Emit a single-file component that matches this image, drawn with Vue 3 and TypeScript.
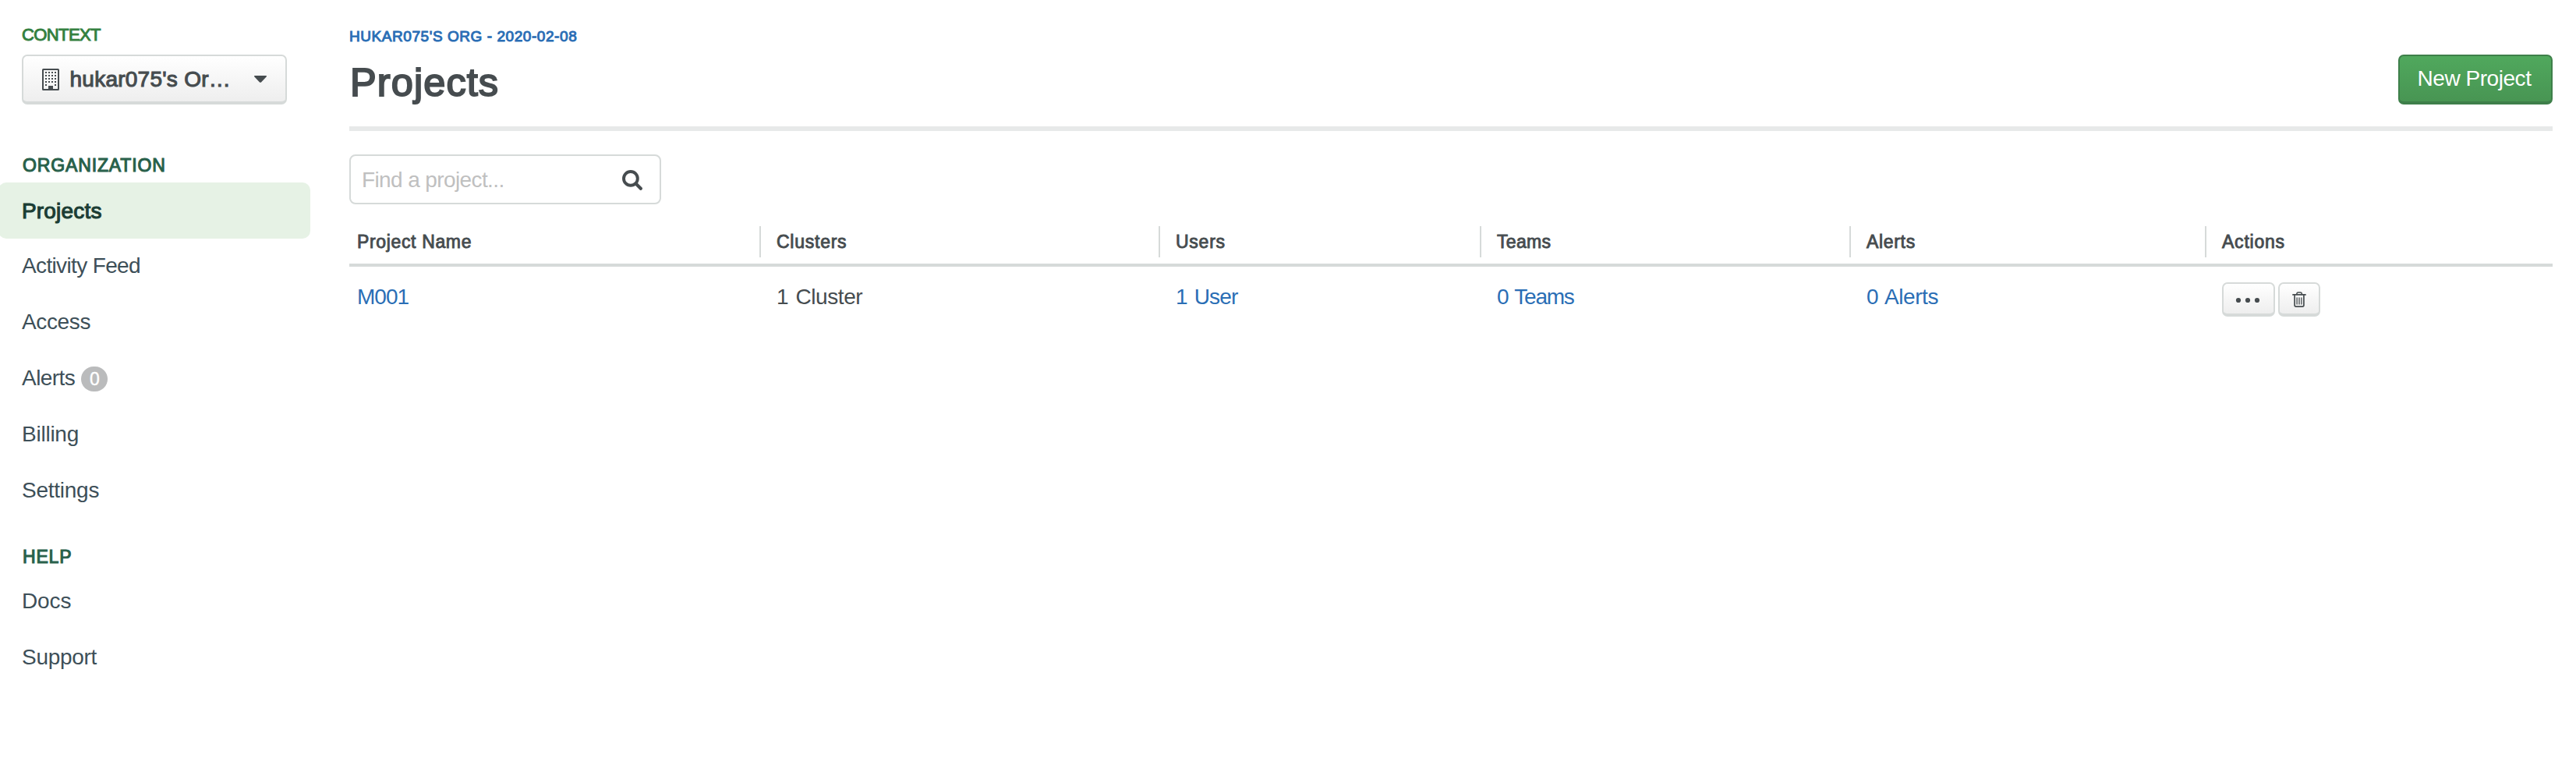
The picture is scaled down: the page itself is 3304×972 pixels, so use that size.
<script setup lang="ts">
interface NavItem {
  label: string
  tracking: number
  active?: boolean
  badge?: number
}
interface NavSection {
  title: string
  tracking: number
  items: NavItem[]
}
interface Column {
  title: string
  titleTracking: number
  value: string
  valueTracking: number
  link: boolean
}

const sections: NavSection[] = [
  {
    title: 'Organization',
    tracking: 0.87,
    items: [
      { label: 'Projects', tracking: 0.18, active: true },
      { label: 'Activity Feed', tracking: -0.64 },
      { label: 'Access', tracking: -0.36 },
      { label: 'Alerts', tracking: -0.55, badge: 0 },
      { label: 'Billing', tracking: -0.24 },
      { label: 'Settings', tracking: -0.25 },
    ],
  },
  {
    title: 'Help',
    tracking: 0.8,
    items: [
      { label: 'Docs', tracking: -0.1 },
      { label: 'Support', tracking: -0.3 },
    ],
  },
]

const columns: Column[] = [
  { title: 'Project Name', titleTracking: 0.65, value: 'M001', valueTracking: -1, link: true },
  { title: 'Clusters', titleTracking: 0.75, value: '1 Cluster', valueTracking: -0.42, link: false },
  { title: 'Users', titleTracking: 0.75, value: '1 User', valueTracking: -0.85, link: true },
  { title: 'Teams', titleTracking: 0.33, value: '0 Teams', valueTracking: -1.25, link: true },
  { title: 'Alerts', titleTracking: 0.68, value: '0 Alerts', valueTracking: -0.42, link: true },
]

const windows: [number, number][] = []
for (let row = 0; row < 5; row++) {
  for (let col = 0; col < 4; col++) {
    if (row === 4 && (col === 1 || col === 2)) continue
    windows.push([4 + col * 4, 4 + row * 4])
  }
}

const spacing = (px: number) => ({ letterSpacing: `${px}px` })
</script>

<template>
  <div class="page">
    <aside class="sidebar">
      <div class="context-label">CONTEXT</div>
      <button class="btn context-select" type="button">
        <svg class="building" width="22" height="28" viewBox="0 0 22 28">
          <rect x="1" y="1" width="20" height="26" rx="0.6" fill="none" stroke="#464c4f" stroke-width="2" />
          <rect v-for="([x, y], i) in windows" :key="i" :x="x" :y="y" width="2" height="2" fill="#464c4f" />
          <rect x="8" y="22" width="6" height="5" fill="#464c4f" />
        </svg>
        <span class="context-name">hukar075's Or…</span>
        <svg class="caret" width="16" height="9" viewBox="0 0 16 9">
          <path d="M0.6 0H15.4Q16.4 0.4 15.6 1.4L9 8.4Q8 9.3 7 8.4L0.4 1.4Q-0.4 0.4 0.6 0Z" fill="#464c4f" />
        </svg>
      </button>

      <nav v-for="s in sections" :key="s.title" class="section">
        <h2 class="section-title" :style="spacing(s.tracking)">{{ s.title }}</h2>
        <a v-for="item in s.items" :key="item.label" class="nav-item" :class="{ active: item.active }">
          <span :style="spacing(item.tracking)">{{ item.label }}</span>
          <span v-if="item.badge !== undefined" class="badge">{{ item.badge }}</span>
        </a>
      </nav>
    </aside>

    <main class="main">
      <header class="header">
        <div>
          <a class="crumb">HUKAR075'S ORG - 2020-02-08</a>
          <h1 class="title">Projects</h1>
        </div>
        <button class="btn btn-primary" type="button">New Project</button>
      </header>

      <div class="search">
        <span class="placeholder">Find a project...</span>
        <svg class="magnifier" width="26" height="26" viewBox="0 0 26 26">
          <circle cx="10.9" cy="10.9" r="8.9" fill="none" stroke="#464c4f" stroke-width="3.9" />
          <path d="M17.6 17.6L23.8 23.8" stroke="#464c4f" stroke-width="4.2" stroke-linecap="round" />
        </svg>
      </div>

      <section class="table">
        <div class="row head">
          <div v-for="c in columns" :key="c.title" class="th" :style="spacing(c.titleTracking)">{{ c.title }}</div>
          <div class="th actions-title">Actions</div>
        </div>
        <div class="row">
          <div v-for="c in columns" :key="c.title" class="td" :class="{ link: c.link }" :style="spacing(c.valueTracking)">{{ c.value }}</div>
          <div class="td actions">
            <button class="btn more" type="button" aria-label="More">
              <svg width="32" height="8" viewBox="0 0 32 8">
                <circle v-for="x in [4, 16, 28]" :key="x" :cx="x" cy="4" r="3.1" fill="#464c4f" />
              </svg>
            </button>
            <button class="btn remove" type="button" aria-label="Delete">
              <svg width="18" height="20" viewBox="0 0 18 20" fill="none" stroke="#464c4f" stroke-linecap="round">
                <path d="M1 3.9H17" stroke-width="1.8" />
                <path d="M5.9 3.6V2.6Q6.1 1 7.6 1H10.6Q12.1 1 12.3 2.6V3.6" stroke-width="1.6" />
                <path d="M3.1 4.2V17.2Q3.1 19.1 5 19.1H13Q14.9 19.1 14.9 17.2V4.2" stroke-width="1.7" />
                <path d="M6.1 7.8V16M9 7.8V16M11.9 7.8V16" stroke-width="1.3" />
              </svg>
            </button>
          </div>
        </div>
      </section>
    </main>
  </div>
</template>

<style>
body {
  margin: 0;
  background: #fff;
}
</style>

<style scoped>
.page {
  display: flex;
  box-sizing: border-box;
  width: 100%;
  height: 972px;
  overflow: hidden;
  font-family: 'Liberation Sans', Arial, sans-serif;
  font-size: 28px;
  color: #464c4f;
  font-kerning: normal;
}
.sidebar {
  flex: 0 0 398px;
  padding-top: 32px;
}
.context-label {
  margin: 0 0 13px 28px;
  font-size: 22px;
  line-height: 25px;
  letter-spacing: -0.6px;
  color: #33803f;
  -webkit-text-stroke: 1px #33803f;
}
.btn {
  display: flex;
  align-items: center;
  box-sizing: border-box;
  margin: 0;
  padding: 0;
  border: 2px solid #d6dad9;
  border-bottom-width: 4px;
  border-radius: 7px;
  background: linear-gradient(#fff, #eeeeee);
  font: inherit;
  color: inherit;
  white-space: nowrap;
}
.context-select {
  width: 340px;
  height: 64px;
  margin-left: 28px;
  padding: 1px 24px 0;
}
.building {
  margin-top: 1px;
}
.context-name {
  margin-left: 13.5px;
  line-height: 31px;
  letter-spacing: 0.25px;
  -webkit-text-stroke: 1.1px #464c4f;
}
.caret {
  margin-left: auto;
}
.section {
  padding-top: 35px;
}
.context-select + .section {
  padding-top: 65px;
}
.section-title {
  margin: 0 0 9px 29px;
  font-size: 23px;
  font-weight: 400;
  line-height: 26px;
  text-transform: uppercase;
  color: #28604a;
  -webkit-text-stroke: 1.1px #28604a;
}
.nav-item {
  display: flex;
  align-items: center;
  box-sizing: border-box;
  height: 72px;
  padding: 0 0 3px 28px;
  line-height: 31px;
  color: #3d4f58;
}
.nav-item.active {
  margin-left: -2px;
  padding: 1px 0 0 30px;
  border-radius: 10px;
  background: #e6f2e5;
  color: #1b3d34;
  -webkit-text-stroke: 1.1px #1b3d34;
}
.badge {
  width: 34px;
  height: 32px;
  margin: 3px 0 0 8px;
  border-radius: 16px;
  background: #babbbc;
  color: #fff;
  font-size: 23px;
  line-height: 32px;
  text-align: center;
  -webkit-text-stroke: 0.4px #fff;
}
.main {
  flex: 1;
  padding: 36px 30px 0 50px;
}
.header {
  display: flex;
  justify-content: space-between;
  align-items: flex-end;
  height: 98px;
  padding-bottom: 28px;
  border-bottom: 6px solid #e7e9e9;
}
.crumb {
  display: block;
  font-size: 19px;
  line-height: 21px;
  letter-spacing: 0.56px;
  color: #2a6eb5;
  -webkit-text-stroke: 1px #2a6eb5;
}
.title {
  margin: 20px 0 0 1px;
  font-size: 50.5px;
  font-weight: 400;
  line-height: 57px;
  letter-spacing: 1.1px;
  -webkit-text-stroke: 2px #464c4f;
}
.btn-primary {
  width: 198px;
  height: 64px;
  padding: 0 0 1px 22.5px;
  border-color: #3e7f4a;
  background: linear-gradient(#50a85d, #489553);
  color: #fff;
  letter-spacing: -0.45px;
}
.search {
  display: flex;
  align-items: center;
  justify-content: space-between;
  box-sizing: border-box;
  width: 400px;
  height: 64px;
  margin-top: 30px;
  padding: 1px 22px 0 14px;
  border: 2px solid #d6dad9;
  border-radius: 8px;
}
.placeholder {
  line-height: 31px;
  letter-spacing: -0.61px;
  color: #bfc0c0;
}
.magnifier {
  margin-top: 1px;
}
.table {
  margin-top: 28px;
}
.row {
  display: grid;
  grid-template-columns: 526fr 512fr 412fr 474fr 456fr 446fr;
}
.head {
  padding-bottom: 8px;
  border-bottom: 4px solid #d6dad9;
}
.th {
  padding-left: 20px;
  border-left: 2px solid #d6dad9;
  font-size: 23px;
  line-height: 40px;
  -webkit-text-stroke: 0.9px #464c4f;
}
.th:first-child {
  padding-left: 10px;
  border-left: 0;
}
.actions-title {
  letter-spacing: 0.78px;
}
.td {
  padding: 23px 0 0 22px;
  line-height: 31px;
  word-spacing: 2px;
}
.td:first-child {
  padding-left: 10px;
}
.link {
  color: #2a6eb5;
}
.actions {
  display: flex;
  gap: 4px;
  padding-top: 20px;
}
.more,
.remove {
  justify-content: center;
  height: 44px;
}
.more {
  width: 68px;
  padding: 4px 2px 0 0;
}
.remove {
  width: 54px;
  padding-top: 2px;
}
</style>
